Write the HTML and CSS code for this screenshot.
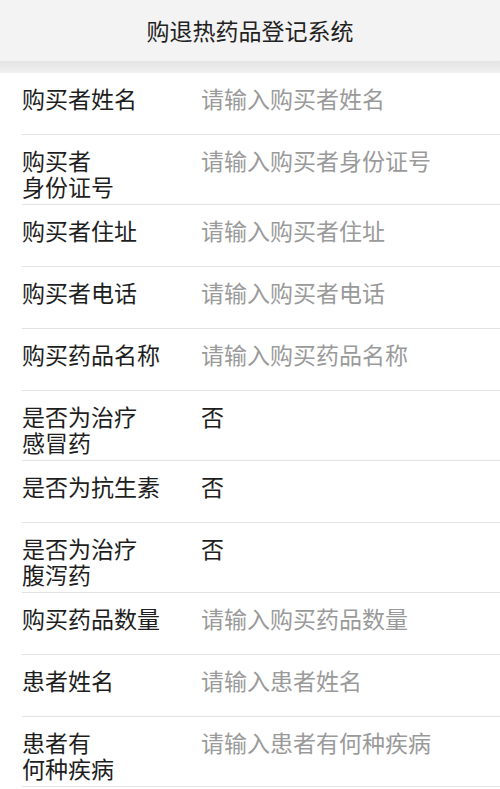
FILE: index.html
```html
<!DOCTYPE html>
<html lang="zh-CN">
<head>
<meta charset="UTF-8">
<meta name="viewport" content="width=device-width, initial-scale=1.0">
<title>购退热药品登记系统</title>
<link rel="stylesheet" href="styles.css">
</head>
<body>

<header class="topbar">购退热药品登记系统</header>
<div class="band"></div>

<div class="form">
    <div class="row">
        <div class="label">购买者姓名</div>
        <div class="value placeholder">请输入购买者姓名</div>
    </div>
    <div class="row">
        <div class="label">购买者<br>身份证号</div>
        <div class="value placeholder">请输入购买者身份证号</div>
    </div>
    <div class="row">
        <div class="label">购买者住址</div>
        <div class="value placeholder">请输入购买者住址</div>
    </div>
    <div class="row">
        <div class="label">购买者电话</div>
        <div class="value placeholder">请输入购买者电话</div>
    </div>
    <div class="row">
        <div class="label">购买药品名称</div>
        <div class="value placeholder">请输入购买药品名称</div>
    </div>
    <div class="row">
        <div class="label">是否为治疗<br>感冒药</div>
        <div class="value">否</div>
    </div>
    <div class="row">
        <div class="label">是否为抗生素</div>
        <div class="value">否</div>
    </div>
    <div class="row">
        <div class="label">是否为治疗<br>腹泻药</div>
        <div class="value">否</div>
    </div>
    <div class="row">
        <div class="label">购买药品数量</div>
        <div class="value placeholder">请输入购买药品数量</div>
    </div>
    <div class="row">
        <div class="label">患者姓名</div>
        <div class="value placeholder">请输入患者姓名</div>
    </div>
    <div class="row">
        <div class="label">患者有<br>何种疾病</div>
        <div class="value placeholder">请输入患者有何种疾病</div>
    </div>
</div>

</body>
</html>
```

FILE: styles.css
```css
body {
    margin: 0;
    padding: 0;
    background: #fff;
    color: #1e1e1e;
    font-family: "Noto Sans CJK SC", "Noto Sans", sans-serif;
}

.topbar {
    height: 61px;
    line-height: 61px;
    background: #f3f3f3;
    text-align: center;
    font-size: 23px;
    color: #222;
}

.band {
    height: 12px;
    background: linear-gradient(#e4e4e4, #f0f0f0);
}

.form {
    padding-left: 22px;
}

.row {
    display: flex;
    min-height: 62px;
    box-sizing: border-box;
    padding: 12px 0 5px;
    border-bottom: 1px solid #e2e2e2;
}

.label {
    width: 179px;
    font-size: 23px;
    line-height: 26px;
    color: #1e1e1e;
}

.value {
    flex: 1;
    font-size: 23px;
    line-height: 26px;
    color: #1e1e1e;
}

.placeholder {
    color: #9a9a9a;
}
```
